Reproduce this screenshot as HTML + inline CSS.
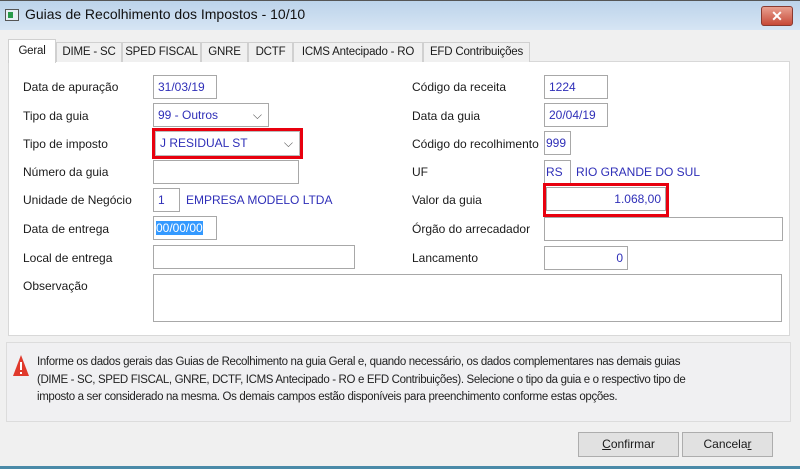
<!DOCTYPE html>
<html><head><meta charset="utf-8"><style>
*{box-sizing:border-box;margin:0;padding:0}
body{width:800px;height:469px;overflow:hidden;background:#f0f0f0;font-family:"Liberation Sans",sans-serif;font-size:12px;color:#1a1a1a;position:relative}
.a{position:absolute}
.title{left:0;top:0;width:800px;height:30px;background:linear-gradient(#bcd3ea,#d6e5f4);border-top:1px solid #555}
.in{position:absolute;background:#fff;border:1px solid #a8a8a8;height:24px;line-height:22px;padding-left:4px;color:#2f2fb8;white-space:nowrap}
.lb{position:absolute;white-space:nowrap}
.tab{position:absolute;top:42px;height:20px;border:1px solid #d0d0d0;border-bottom:none;background:#f0f0f0;line-height:19px;text-align:center;white-space:nowrap;font-size:11.5px;letter-spacing:-0.2px}
.red{position:absolute;border:3px solid #e8000e}
.btn{position:absolute;top:432px;height:25px;border:1px solid #adadad;background:#e1e1e1;text-align:center;line-height:23px}
</style></head><body>
<div class="a title"></div>
<div class="a" style="left:5px;top:9px;width:14px;height:12px;border:1px solid #555;background:#e8eef4"><div class="a" style="left:2px;top:2px;width:5px;height:6px;background:#2a9a4a"></div></div>
<div class="a" style="left:25px;top:6px;font-size:14px;color:#111">Guias de Recolhimento dos Impostos - 10/10</div>
<div class="a" style="left:761px;top:6px;width:32px;height:20px;border-radius:3px;border:1px solid #8a3a30;background:linear-gradient(#e8a090,#c74a38);color:#fff;font-weight:bold;text-align:center;line-height:18px;font-size:14px">✕</div>

<div class="a" style="left:8px;top:61px;width:782px;height:275px;background:#fff;border:1px solid #d8d8d8"></div>
<div class="tab" style="left:8px;top:39px;width:48px;height:24px;background:#fff;line-height:22px">Geral</div>
<div class="tab" style="left:56px;width:66px">DIME - SC</div>
<div class="tab" style="left:122px;width:79px">SPED FISCAL</div>
<div class="tab" style="left:201px;width:47px">GNRE</div>
<div class="tab" style="left:248px;width:45px">DCTF</div>
<div class="tab" style="left:293px;width:130px">ICMS Antecipado - RO</div>
<div class="tab" style="left:423px;width:107px">EFD Contribuições</div>

<div class="lb" style="left:23px;top:80px">Data de apuração</div>
<div class="lb" style="left:23px;top:109px">Tipo da guia</div>
<div class="lb" style="left:23px;top:137px">Tipo de imposto</div>
<div class="lb" style="left:23px;top:165px">Número da guia</div>
<div class="lb" style="left:23px;top:193px">Unidade de Negócio</div>
<div class="lb" style="left:23px;top:222px">Data de entrega</div>
<div class="lb" style="left:23px;top:251px">Local de entrega</div>
<div class="lb" style="left:23px;top:279px">Observação</div>

<div class="in" style="left:153px;top:75px;width:64px">31/03/19</div>
<div class="in" style="left:153px;top:103px;width:116px">99 - Outros<span style="position:absolute;right:6px;color:#555">⌵</span></div>
<div class="red" style="left:152px;top:128px;width:151px;height:31px"></div>
<div class="in" style="left:155px;top:131px;width:145px;height:25px;border-color:#bbb">J RESIDUAL ST<span style="position:absolute;right:6px;color:#555">⌵</span></div>
<div class="in" style="left:153px;top:160px;width:146px"></div>
<div class="in" style="left:153px;top:188px;width:27px">1</div>
<div class="lb" style="left:186px;top:193px;color:#2f2fb8">EMPRESA MODELO LTDA</div>
<div class="in" style="left:153px;top:216px;width:64px;padding-left:2px"><span style="background:#3399ff;color:#fff;line-height:14px;display:inline-block">00/00/00</span></div>
<div class="in" style="left:153px;top:245px;width:202px"></div>
<div class="in" style="left:153px;top:274px;width:629px;height:48px"></div>

<div class="lb" style="left:412px;top:80px">Código da receita</div>
<div class="lb" style="left:412px;top:109px">Data da guia</div>
<div class="lb" style="left:412px;top:137px">Código do recolhimento</div>
<div class="lb" style="left:412px;top:165px">UF</div>
<div class="lb" style="left:412px;top:193px">Valor da guia</div>
<div class="lb" style="left:412px;top:222px">Órgão do arrecadador</div>
<div class="lb" style="left:412px;top:251px">Lancamento</div>

<div class="in" style="left:544px;top:75px;width:64px">1224</div>
<div class="in" style="left:544px;top:103px;width:64px">20/04/19</div>
<div class="in" style="left:544px;top:131px;width:27px;padding-left:1px">999</div>
<div class="in" style="left:544px;top:160px;width:27px;padding-left:1px">RS</div>
<div class="lb" style="left:576px;top:165px;color:#2f2fb8">RIO GRANDE DO SUL</div>
<div class="red" style="left:543px;top:183px;width:126px;height:34px"></div>
<div class="in" style="left:546px;top:187px;width:120px;text-align:right;padding-right:4px">1.068,00</div>
<div class="in" style="left:544px;top:217px;width:239px"></div>
<div class="in" style="left:544px;top:246px;width:84px;text-align:right;padding-right:4px">0</div>

<div class="a" style="left:6px;top:342px;width:785px;height:80px;border:1px solid #dcdcdc;background:#f0f0f2"></div>
<svg class="a" style="left:12px;top:354px" width="18" height="24" viewBox="0 0 18 24"><path d="M9 1 L17 22 L1 22 Z" fill="#e0392c"/><rect x="8" y="8" width="2" height="8" fill="#fff"/><rect x="8" y="18" width="2" height="2" fill="#fff"/></svg>
<div class="a" style="left:37px;top:354px;width:760px;line-height:17.5px;font-size:11.5px;letter-spacing:-0.35px;color:#222;white-space:nowrap">Informe os dados gerais das Guias de Recolhimento na guia Geral e, quando necessário, os dados complementares nas demais guias<br>(DIME - SC, SPED FISCAL, GNRE, DCTF, ICMS Antecipado - RO e EFD Contribuições). Selecione o tipo da guia e o respectivo tipo de<br>imposto a ser considerado na mesma. Os demais campos estão disponíveis para preenchimento conforme estas opções.</div>

<div class="btn" style="left:578px;width:101px"><u>C</u>onfirmar</div>
<div class="btn" style="left:682px;width:91px">Cancela<u>r</u></div>
<div class="a" style="left:0;top:466px;width:800px;height:3px;background:#4a8aa8"></div>
</body></html>
